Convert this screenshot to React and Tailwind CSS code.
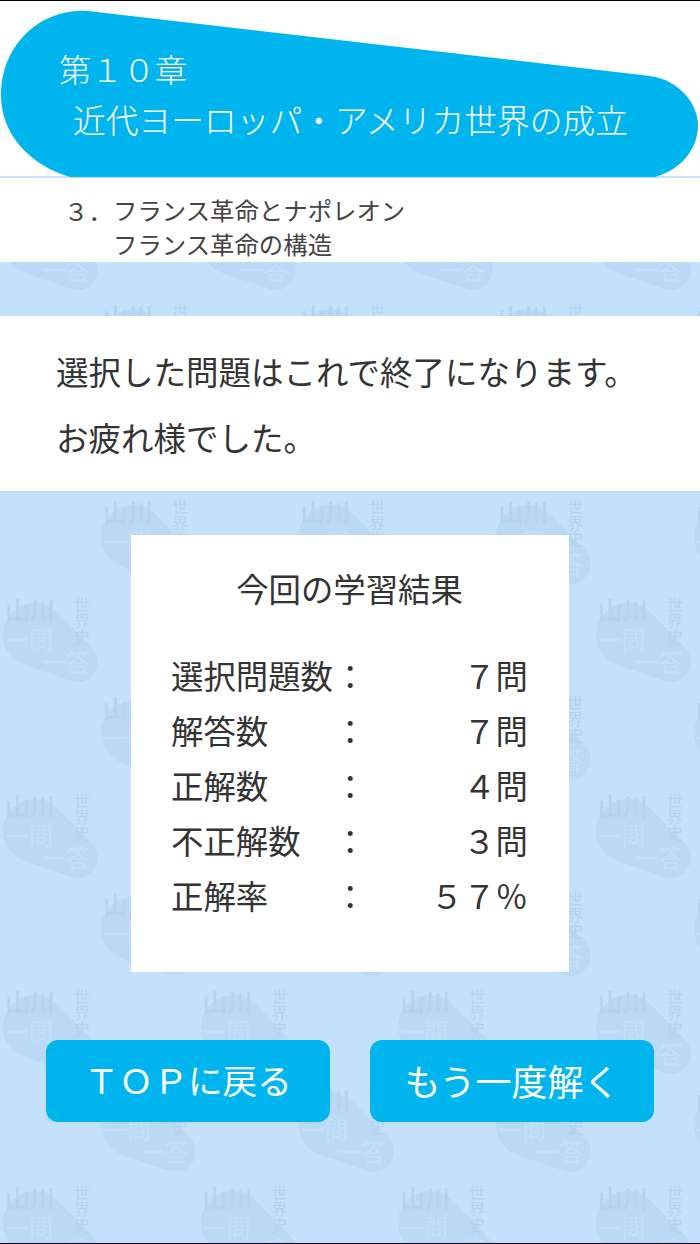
const cjk = "font-['Noto_Sans_CJK_JP','Noto_Sans',sans-serif] font-normal"

const rows = [
  { label: "選択問題数", value: "７問" },
  { label: "解答数", value: "７問" },
  { label: "正解数", value: "４問" },
  { label: "不正解数", value: "３問" },
  { label: "正解率", value: "５７％" },
]

function Logo({ className }) {
  return (
    <div className={`absolute h-[90px] w-[100px] ${className}`}>
      <svg viewBox="0 0 100 90" className="absolute inset-0 h-full w-full">
        <path d="M57.9 15.7 L92.3 51.1 A20 20 0 0 1 71.7 83.9 L24.9 68.3 A32 32 0 1 1 57.9 15.7 Z" fill="#b9d9f6" />
      </svg>
      <span className="absolute left-[5px] top-0 text-[25px] font-medium leading-[24px] text-[#b5d3ec]">山川</span>
      <span className="absolute left-[74px] top-0 text-[16px] leading-[16px] [writing-mode:vertical-rl] text-[#b5d3ec]">世界史</span>
      <span className="absolute left-[5px] top-[30px] text-[24px] font-medium leading-[24px] text-[#c2dff9]">一問</span>
      <span className="absolute left-[42px] top-[52px] text-[24px] font-medium leading-[24px] text-[#c2dff9]">一答</span>
    </div>
  )
}

function Watermark() {
  return (
    <div className="absolute left-0 top-[-89px] flex w-[800px] flex-wrap">
      {Array.from({ length: 28 }).map((_, i) => (
        <div key={i} className="relative h-[196px] w-[197.6px] shrink-0">
          <Logo className="left-[98px] top-0" />
          <Logo className="left-0 top-[98px]" />
        </div>
      ))}
    </div>
  )
}

export default function App() {
  return (
    <div className={`relative h-[1244px] w-[700px] overflow-hidden bg-[#c3e1fd] ${cjk}`}>
      <Watermark />
      <div className="relative flex h-full flex-col border-y border-black">
        <header className="relative h-[177px] border-b-2 border-[#c3e1fd] bg-white">
          <svg viewBox="0 0 700 177" className="absolute left-0 top-[-1px] h-[177px] w-[700px]">
            <path d="M88 11 L650 76 C680 80 698 105 698 125 C698 150 680 170 655 177 L70 177 C30 165 1 135 1 95 C1 45 40 8 88 11 Z" fill="#00b5ee" />
          </svg>
          <div className="relative pl-[59px] pt-[45px] text-[32px] font-light leading-[44px] text-white">第１０章</div>
          <div className="relative pl-[73px] pt-[7px] text-[32.75px] font-light leading-[44px] text-white">近代ヨーロッパ・アメリカ世界の成立</div>
        </header>

        <section className="flex h-[84px] items-center bg-white pl-[64px] text-[24.4px] leading-[34px] text-[#444]">
          <div className="w-[49px] self-start pt-[16px]">３．</div>
          <div className="pt-[13px]">
            <div>フランス革命とナポレオン</div>
            <div>フランス革命の構造</div>
          </div>
        </section>

        <section className="mt-[54px] flex h-[175px] flex-col justify-center gap-[22px] bg-white pl-[56px] text-[32.5px] leading-[44px] text-[#333]">
          <p>選択した問題はこれで終了になります。</p>
          <p>お疲れ様でした。</p>
        </section>

        <section className="mx-auto mt-[44px] h-[437px] w-[438px] bg-white pl-[40px] pr-[41px] pt-[31px] text-[32.4px] leading-[44px] text-[#333]">
          <h2 className="text-center">今回の学習結果</h2>
          <div className="mt-[43px] flex flex-col gap-[11px]">
            {rows.map((r) => (
              <div key={r.label} className="flex">
                <span className="w-[163px]">{r.label}</span>
                <span className="w-[32px] text-center">：</span>
                <span className="flex-1 text-right">{r.value}</span>
              </div>
            ))}
          </div>
        </section>

        <div className="mt-[68px] flex gap-[40px] pl-[46px]">
          <button className="h-[82px] w-[284px] rounded-[12px] bg-[#00b5ee] pb-[3px] text-[34.6px] text-white">ＴＯＰに戻る</button>
          <button className="h-[82px] w-[284px] rounded-[12px] bg-[#00b5ee] pb-[3px] text-[36px] text-white">もう一度解く</button>
        </div>
      </div>
    </div>
  )
}
